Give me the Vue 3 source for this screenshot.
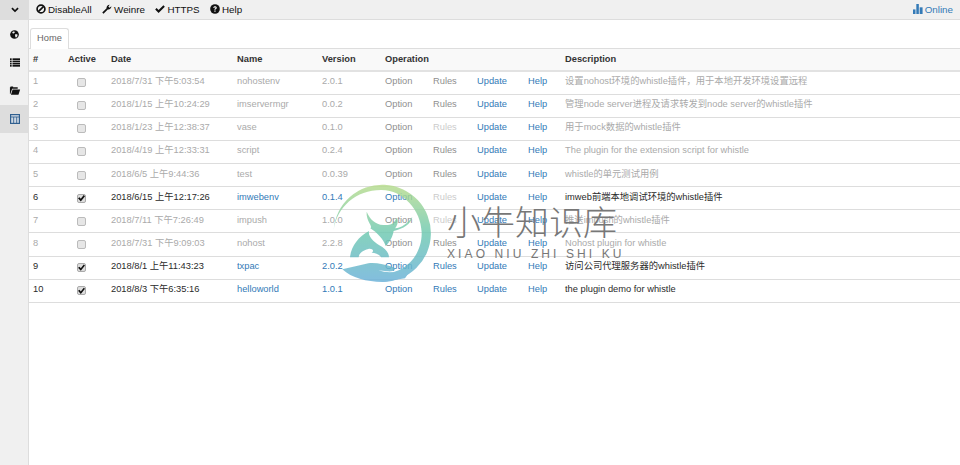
<script setup>
const plugins = [
  { n: 1, date: '2018/7/31 下午5:03:54', name: 'nohostenv', version: '2.0.1', desc: '设置nohost环境的whistle插件，用于本地开发环境设置远程' },
  { n: 2, date: '2018/1/15 上午10:24:29', name: 'imservermgr', version: '0.0.2', desc: '管理node server进程及请求转发到node server的whistle插件' },
  { n: 3, date: '2018/1/23 上午12:38:37', name: 'vase', version: '0.1.0', desc: '用于mock数据的whistle插件', noRules: true },
  { n: 4, date: '2018/4/19 上午12:33:31', name: 'script', version: '0.2.4', desc: 'The plugin for the extension script for whistle' },
  { n: 5, date: '2018/6/5 上午9:44:36', name: 'test', version: '0.0.39', desc: 'whistle的单元测试用例' },
  { n: 6, date: '2018/6/15 上午12:17:26', name: 'imwebenv', version: '0.1.4', desc: 'imweb前端本地调试环境的whistle插件', active: true, noRules: true },
  { n: 7, date: '2018/7/11 下午7:26:49', name: 'impush', version: '1.0.0', desc: '推送impush的whistle插件', noRules: true },
  { n: 8, date: '2018/7/31 下午9:09:03', name: 'nohost', version: '2.2.8', desc: 'Nohost plugin for whistle' },
  { n: 9, date: '2018/8/1 上午11:43:23', name: 'txpac', version: '2.0.2', desc: '访问公司代理服务器的whistle插件', active: true },
  { n: 10, date: '2018/8/3 下午6:35:16', name: 'helloworld', version: '1.0.1', desc: 'the plugin demo for whistle', active: true },
];
</script>

<template>
  <div class="app">
    <header class="topbar">
      <div class="toggle">
        <svg width="8" height="6" viewBox="0 0 12 8"><path d="M0.5 2 2.3 0.3 6 4 9.7 0.3 11.5 2 6 7.5Z" fill="#111" /></svg>
      </div>
      <nav class="menu">
        <a class="item">
          <svg width="10" height="10" viewBox="0 0 12 12"><circle cx="6" cy="6" r="4.7" fill="none" stroke="#111" stroke-width="2" /><path d="M2.8 9.2 9.2 2.8" stroke="#111" stroke-width="2" /></svg>
          DisableAll
        </a>
        <a class="item">
          <svg width="10" height="10" viewBox="0 0 12 12"><path d="M0.3 10.3 5.5 5.2C5 3.2 6.5 0.8 9.3 0.8L7.6 3 9 4.4 11.3 2.8C11.3 5.4 9 7.2 6.9 6.6L1.8 11.8Z" fill="#111" /></svg>
          Weinre
        </a>
        <a class="item">
          <svg width="10" height="10" viewBox="0 0 12 12"><path d="M0.2 6.5 1.9 4.8 4.3 7.2 10.1 1.6 11.8 3.3 4.3 10.7Z" fill="#111" /></svg>
          HTTPS
        </a>
        <a class="item">
          <svg width="10" height="10" viewBox="0 0 12 12"><circle cx="6" cy="6" r="5.8" fill="#111" /><path d="M3.8 4.6C3.9 3.3 4.8 2.7 6 2.7 7.3 2.7 8.2 3.5 8.2 4.5 8.2 5.9 6.6 5.9 6.6 7H5.2C5.2 5.3 6.6 5.3 6.6 4.6 6.6 4.2 6.4 4 6 4 5.6 4 5.3 4.2 5.2 4.7ZM5.2 7.7H6.7V9.2H5.2Z" fill="#f0f0f0" /></svg>
          Help
        </a>
      </nav>
      <a class="online">
        <svg width="10" height="10" viewBox="0 0 12 12" fill="#337ab7"><rect x="0" y="6.5" width="3" height="5.5" /><rect x="4" y="0" width="3" height="12" /><rect x="8" y="4" width="3.5" height="8" /></svg>
        Online
      </a>
    </header>

    <div class="body">
      <aside class="sidebar">
        <div class="side-btn">
          <svg width="9" height="9" viewBox="0 0 12 12"><circle cx="6" cy="6" r="5.8" fill="#111" /><path d="M3 2.5 5.5 1.8 6.5 3.4 4.8 4.6 3.4 4.2ZM6.8 5.5 9.8 5.8 10 8 8 10.4 6.8 8.4Z" fill="#f0f0f0" /></svg>
        </div>
        <div class="side-btn">
          <svg width="10" height="9" viewBox="0 0 12 10" fill="#111"><rect x="0" y="0" width="2" height="2" /><rect x="3" y="0" width="9" height="2" /><rect x="0" y="2.7" width="2" height="2" /><rect x="3" y="2.7" width="9" height="2" /><rect x="0" y="5.4" width="2" height="2" /><rect x="3" y="5.4" width="9" height="2" /><rect x="0" y="8" width="2" height="2" /><rect x="3" y="8" width="9" height="2" /></svg>
        </div>
        <div class="side-btn">
          <svg width="12" height="9" viewBox="0 0 13 11"><path d="M0.3 9.8V1.5H1V0.6H4.2V1.5H9.8V3.4H3L0.8 9.8Z M1.5 10.6 3.6 4.2H12.8L10.7 10.6Z" fill="#111" /></svg>
        </div>
        <div class="side-btn current">
          <svg width="10" height="10" viewBox="0 0 12 12"><rect x="0.7" y="0.7" width="10.6" height="10.6" fill="#cfd8e2" stroke="#2f5f8f" stroke-width="1.4" /><path d="M1 3.6H11M4.4 3.6V11M8 3.6V11" stroke="#2f5f8f" stroke-width="1" /></svg>
        </div>
      </aside>

      <main class="content">
        <div class="tabs">
          <div class="tab">Home</div>
        </div>
        <table class="plugins">
          <colgroup>
            <col class="c-num" /><col class="c-active" /><col class="c-date" /><col class="c-name" /><col class="c-version" />
            <col class="c-option" /><col class="c-rules" /><col class="c-update" /><col class="c-help" /><col />
          </colgroup>
          <thead>
            <tr>
              <th>#</th>
              <th>Active</th>
              <th>Date</th>
              <th>Name</th>
              <th>Version</th>
              <th colspan="4">Operation</th>
              <th>Description</th>
            </tr>
          </thead>
          <tbody>
            <tr v-for="p in plugins" :key="p.n" :class="{ off: !p.active }">
              <td>{{ p.n }}</td>
              <td class="check"><input type="checkbox" :checked="p.active" /></td>
              <td>{{ p.date }}</td>
              <td class="plink">{{ p.name }}</td>
              <td class="plink">{{ p.version }}</td>
              <td class="opt">Option</td>
              <td :class="p.noRules ? 'muted' : 'opt'">Rules</td>
              <td class="link">Update</td>
              <td class="link">Help</td>
              <td>{{ p.desc }}</td>
            </tr>
          </tbody>
        </table>
      </main>
    </div>

    <div class="watermark">
      <svg class="wm-logo" width="120" height="115" viewBox="0 0 360 345">
        <defs>
          <linearGradient id="wm" gradientUnits="userSpaceOnUse" x1="0" y1="30" x2="0" y2="320">
            <stop offset="0" stop-color="#b7dc8c" />
            <stop offset="0.5" stop-color="#6cc8b0" />
            <stop offset="1" stop-color="#68b0d8" />
          </linearGradient>
        </defs>
        <g fill="url(#wm)">
          <!-- ring, thin at the left end and wider towards the hand -->
          <path d="M26 165A146 146 0 1 1 172 321L165 296C240 300 292 240 290 172 288 105 235 46 170 45 95 44 35 95 26 165Z" />
          <!-- hand -->
          <path d="M52 283C78 276 105 272 130 265 150 262 180 268 205 277 216 284 206 291 186 289L160 286C200 300 250 290 285 245L240 310 172 321C125 320 80 310 52 283Z" />
          <!-- bull head and horns -->
          <path d="M125 110C135 133 150 148 175 150 190 151 200 148 206 143L216 128C220 142 218 150 210 160 230 158 248 145 262 125 258 148 235 160 206 168 202 188 195 200 182 213 176 194 156 172 136 160 146 155 122 138 125 110Z" />
          <!-- bull body -->
          <path d="M75 247C78 215 100 185 132 168 128 186 150 204 172 216 186 226 192 236 192 247L168 247C164 238 152 234 140 233 150 226 140 220 130 222 112 226 102 236 101 247Z" />
        </g>
      </svg>
      <div class="wm-text">
        <div class="wm-cn">小牛知识库</div>
        <div class="wm-en">XIAO NIU ZHI SHI KU</div>
      </div>
    </div>
  </div>
</template>

<style scoped>
.app {
  position: relative;
  height: 465px;
  overflow: hidden;
  display: flex;
  flex-direction: column;
  background: #fff;
  color: #333;
  font: 9.3px/1.42857 "Liberation Sans", "Noto Sans CJK SC", sans-serif;
}
.topbar {
  flex: none;
  height: 20px;
  box-sizing: border-box;
  display: flex;
  align-items: center;
  background: #f0f0f0;
  border-bottom: 1px solid #ddd;
}
.toggle {
  width: 29px;
  height: 19px;
  display: flex;
  align-items: center;
  justify-content: center;
  background: #ddd;
}
.menu {
  display: flex;
  padding-left: 7px;
  gap: 10.5px;
}
.item {
  display: flex;
  align-items: center;
  gap: 2px;
  font-size: 9.8px;
  color: #111;
}
.online {
  margin-left: auto;
  margin-right: 7px;
  display: flex;
  align-items: center;
  gap: 2px;
  font-size: 9.8px;
  color: #337ab7;
}
.body {
  flex: 1;
  display: flex;
  min-height: 0;
}
.sidebar {
  flex: none;
  width: 28px;
  background: #f0f0f0;
  border-right: 1px solid #ddd;
}
.side-btn {
  height: 28.3px;
  display: flex;
  align-items: center;
  justify-content: center;
  padding-left: 1px;
  box-sizing: border-box;
}
.side-btn.current {
  background: #ddd;
}
.content {
  flex: 1;
  min-width: 0;
}
.tabs {
  height: 29px;
  padding: 8px 0 0 1px;
  box-sizing: border-box;
  border-bottom: 1px solid #ddd;
}
.tab {
  width: 39px;
  height: 21px;
  box-sizing: border-box;
  line-height: 18px;
  text-align: center;
  color: #666;
  background: #fff;
  border: 1px solid #ddd;
  border-bottom: 0;
  border-radius: 3px 3px 0 0;
}
.plugins {
  width: 100%;
  table-layout: fixed;
  border-collapse: collapse;
}
.c-num { width: 35px; }
.c-active { width: 43px; }
.c-date { width: 126px; }
.c-name { width: 85px; }
.c-version { width: 63px; }
.c-option { width: 48px; }
.c-rules { width: 44px; }
.c-update { width: 51px; }
.c-help { width: 37px; }
.plugins th {
  height: 21px;
  padding: 0 4px;
  text-align: left;
  font-weight: bold;
  color: #333;
  background: #f9f9f9;
  border-bottom: 2px solid #e2e2e2;
}
.plugins td {
  height: 23.15px;
  padding: 0 4px 2px;
  box-sizing: border-box;
  color: #2a2a2a;
  border-bottom: 1px solid #ddd;
  white-space: nowrap;
}
.plugins tr.off td {
  color: #aaa;
}
.plugins td.plink {
  color: #337ab7;
}
.plugins tr.off td.plink {
  color: #aaa;
}
.plugins td.opt {
  color: #337ab7;
}
.plugins tr.off td.opt {
  color: #8f8f8f;
}
.plugins td.link,
.plugins tr.off td.link {
  color: #337ab7;
}
.plugins td.muted,
.plugins tr.off td.muted {
  color: #ccc;
}
.plugins td.check {
  padding: 0 4px 0 13px;
}
.check input {
  appearance: none;
  position: relative;
  display: block;
  margin: 0;
  width: 9px;
  height: 9px;
  box-sizing: border-box;
  background: #e6e6e6;
  border: 1px solid #bbb;
  border-radius: 2px;
}
.check input:checked {
  background: #ddd;
  border-color: #aaa;
}
.check input:checked::after {
  content: "";
  position: absolute;
  left: 0;
  top: 0;
  width: 7px;
  height: 7px;
  background: #111;
  clip-path: polygon(0 50%, 22% 35%, 40% 58%, 82% 5%, 100% 20%, 40% 95%);
}
.watermark {
  position: absolute;
  left: 325px;
  top: 175px;
  display: flex;
  align-items: flex-start;
  pointer-events: none;
}
.wm-logo {
  opacity: 0.82;
}
.wm-text {
  padding: 22px 0 0 2px;
  color: #777;
}
.wm-cn {
  font-size: 34px;
  line-height: 48px;
  font-family: "Noto Sans CJK SC", sans-serif;
  font-weight: 300;
}
.wm-en {
  margin-top: 2px;
  font-size: 12px;
  line-height: 14px;
  letter-spacing: 3.1px;
  white-space: nowrap;
}
</style>
